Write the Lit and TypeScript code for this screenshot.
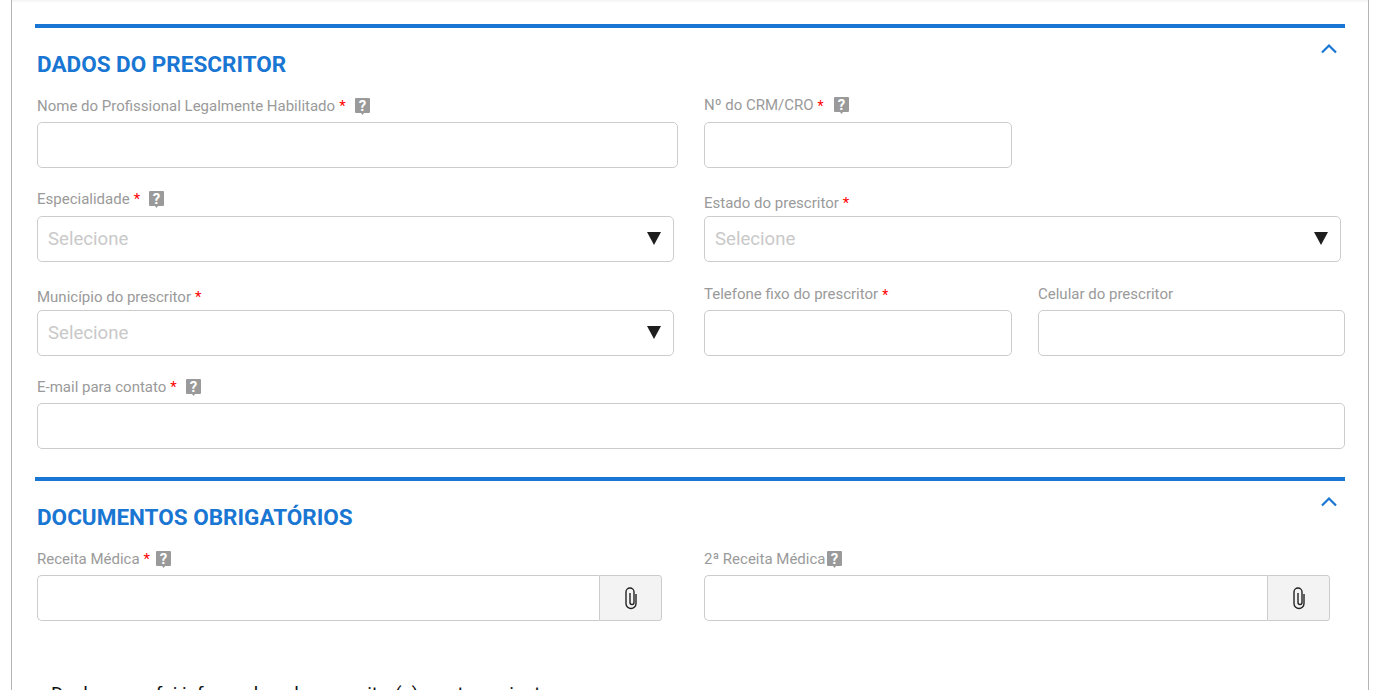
import { LitElement, html, css, svg } from "lit";
import { customElement } from "lit/decorators.js";

type HelpKind = "" | "gap" | "near" | "tight";

const help = (kind: HelpKind) => html`<svg class="help ${kind}" width="15" height="17" viewBox="0 0 15 17"><path d="M1 0h13a1 1 0 0 1 1 1v13a1 1 0 0 1-1 1H9l-1.5 2-1.5-2H1a1 1 0 0 1-1-1V1a1 1 0 0 1 1-1z" fill="#9a9a9a"/><text x="7.5" y="13" text-anchor="middle" class="q">?</text></svg>`;
const clip = () => html`<svg width="14" height="24" viewBox="0 0 14 24" fill="none" stroke="#222" stroke-width="1.4"><path d="M12 8V17.5A5 5 0 0 1 2 17.5V6A4 4 0 0 1 10 6V16.5A2 2 0 0 1 6 16.5V7"/></svg>`;
const chevron = svg`<path d="M1 9.5 8 2.5 15 9.5" fill="none" stroke="#1976d2" stroke-width="2.2"/>`;
const toggle = () => html`<svg class="toggle" viewBox="0 0 16 11">${chevron}</svg>`;

@customElement("app-root")
export class AppRoot extends LitElement {
  static styles = css`
    :host { display: block; height: 690px; overflow: hidden; background: #fff; font-family: Roboto, sans-serif; }
    .page { margin-left: 11px; width: 1358px; box-sizing: border-box; height: 690px; border-left: 1px solid #b5b5b5; border-right: 1px solid #b5b5b5; padding: 24px 23px 0 23px; position: relative; overflow: hidden; }
    .shadow { position: absolute; left: 0; right: 0; top: 0; height: 3px; background: linear-gradient(#f3f3f3, #fff); }
    .section { border-top: 4px solid #1976d2; position: relative; width: 1310px; }
    .section + .section { margin-top: 28px; }
    .toggle { position: absolute; right: 8px; top: 15px; width: 16px; height: 11px; display: block; }
    h2 { margin: 0; font-size: 22.5px; font-weight: 700; color: #1976d2; line-height: 27px; padding: 23px 0 0 2px; }
    .row { display: flex; padding-left: 2px; margin-top: 22px; }
    .row.first { margin-top: 18px; }
    .row.r3 { margin-top: 23px; }
    .row.docs { margin-top: 19px; }
    .field { display: flex; flex-direction: column; justify-content: flex-end; flex: none; }
    .w641 { width: 641px; margin-right: 26px; }
    .w637 { width: 637px; margin-right: 30px; }
    .w637b { width: 637px; }
    .w308 { width: 308px; margin-right: 26px; }
    .w307 { width: 307px; }
    .full { width: 1308px; }
    .d1 { width: 625px; margin-right: 42px; }
    .d2 { width: 626px; }
    .d1 .attach { width: 63px; }
    label { display: flex; align-items: center; font-size: 15px; line-height: 18px; color: #9a9a9a; height: 18px; white-space: nowrap; }
    .g4 { margin-bottom: 4px; }
    .g7 { margin-bottom: 7px; }
    .g8 { margin-bottom: 8px; }
    .req { color: #f00; margin-left: 4px; }
    .req.small { font-size: 14px; position: relative; top: 1px; margin-right: 1px; }
    .help { margin-left: 9px; flex: none; }
    .help.near { margin-left: 6px; }
    .help.tight { margin-left: 2px; }
    .q { font: 700 15px Roboto, sans-serif; fill: #fff; }
    .box { height: 46px; box-sizing: border-box; border: 1px solid #ccc; border-radius: 5px; background: #fff; }
    .select { display: flex; align-items: center; justify-content: space-between; padding: 0 12px 1px 10px; font-size: 18.6px; color: #c9c9c9; }
    .arrow { width: 0; height: 0; border-left: 7px solid transparent; border-right: 7px solid transparent; border-top: 13px solid #1e1e1e; }
    .file { display: flex; height: 46px; }
    .file .box { flex: 1; border-radius: 5px 0 0 5px; border-right: 0; }
    .attach { width: 63px; box-sizing: border-box; border: 1px solid #ccc; border-radius: 0 3px 3px 0; background: #f3f3f3; display: flex; align-items: center; justify-content: center; }
    .decl { position: absolute; left: 39px; top: 683px; font-size: 18.9px; color: #111; white-space: nowrap; line-height: 22px; }
  `;

  private lab(t: string, gap: string, req: "" | "star" | "small", h: HelpKind) {
    return html`<label class=${gap}>${t}${req ? html`<span class="req ${req === "small" ? "small" : ""}">*</span>` : ""}${h ? help(h) : ""}</label>`;
  }

  private sel() {
    return html`<div class="box select">Selecione<span class="arrow"></span></div>`;
  }

  private file() {
    return html`<div class="file"><div class="box"></div><div class="attach">${clip()}</div></div>`;
  }

  render() {
    return html`<div class="page">
      <div class="shadow"></div>
      <section class="section">
        ${toggle()}
        <h2>DADOS DO PRESCRITOR</h2>
        <div class="row first">
          <div class="field w641">${this.lab("Nome do Profissional Legalmente Habilitado", "g7", "star", "gap")}<div class="box"></div></div>
          <div class="field w308">${this.lab("Nº do CRM/CRO", "g8", "small", "gap")}<div class="box"></div></div>
        </div>
        <div class="row">
          <div class="field w637">${this.lab("Especialidade", "g8", "star", "gap")}${this.sel()}</div>
          <div class="field w637b">${this.lab("Estado do prescritor", "g4", "star", "")}${this.sel()}</div>
        </div>
        <div class="row r3">
          <div class="field w637">${this.lab("Município do prescritor", "g4", "star", "")}${this.sel()}</div>
          <div class="field w308">${this.lab("Telefone fixo do prescritor", "g7", "small", "")}<div class="box"></div></div>
          <div class="field w307">${this.lab("Celular do prescritor", "g7", "", "")}<div class="box"></div></div>
        </div>
        <div class="row">
          <div class="field full">${this.lab("E-mail para contato", "g7", "star", "gap")}<div class="box"></div></div>
        </div>
      </section>
      <section class="section">
        ${toggle()}
        <h2>DOCUMENTOS OBRIGATÓRIOS</h2>
        <div class="row docs">
          <div class="field d1">${this.lab("Receita Médica", "g7", "star", "near")}${this.file()}</div>
          <div class="field d2">${this.lab("2ª Receita Médica", "g7", "", "tight")}${this.file()}</div>
        </div>
      </section>
      <div class="decl">Declaro que fui informado pelo prescritor(a) e este paciente e o</div>
    </div>`;
  }
}
